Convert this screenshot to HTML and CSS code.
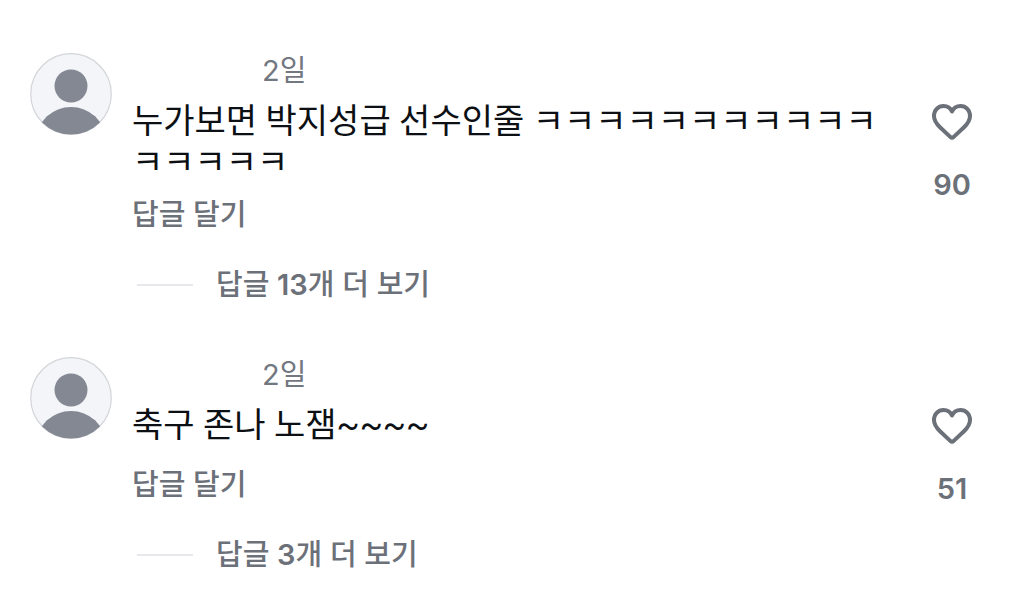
FILE: index.html
```html
<!DOCTYPE html>
<html lang="ko">
<head>
<meta charset="utf-8">
<meta name="viewport" content="width=device-width, initial-scale=1">
<title>댓글</title>
<link rel="stylesheet" href="styles.css">
</head>
<body>
<main class="comments">
  <article class="comment">
    <svg class="avatar" viewBox="0 0 82 82" aria-hidden="true">
      <defs><clipPath id="avatar-clip"><circle cx="41" cy="41" r="40.5"/></clipPath></defs>
      <circle cx="41" cy="41" r="40.3" fill="#f3f5f8" stroke="#d3d5d9" stroke-width="1.2"/>
      <circle cx="41" cy="33" r="16.5" fill="#838893"/>
      <ellipse cx="41" cy="86" rx="34" ry="32" fill="#838893" clip-path="url(#avatar-clip)"/>
    </svg>
    <div class="body">
      <time class="time">2일</time>
      <p class="text">누가보면 박지성급 선수인줄 ㅋㅋㅋㅋㅋㅋㅋㅋㅋㅋㅋㅋㅋㅋㅋㅋ</p>
      <button class="reply" type="button">답글 달기</button>
      <button class="more" type="button"><span class="line"></span><span>답글 <span class="count">13</span>개 더 보기</span></button>
    </div>
    <button class="like" type="button" aria-label="좋아요 90개">
      <svg class="heart" viewBox="0 0 40 36" aria-hidden="true"><path d="M20 7.500C18.500 4 15.500 2 11.500 2C6 2 2 6.300 2 12C2 16.500 4.300 19.700 8 23.200L18.300 32.900Q20 34.400 21.700 32.900L32 23.200C35.700 19.700 38 16.500 38 12C38 6.300 34 2 28.500 2C24.500 2 21.500 4 20 7.500Z"/></svg>
      <span class="count">90</span>
    </button>
  </article>
  <article class="comment">
    <svg class="avatar" viewBox="0 0 82 82" aria-hidden="true">
      <circle cx="41" cy="41" r="40.3" fill="#f3f5f8" stroke="#d3d5d9" stroke-width="1.2"/>
      <circle cx="41" cy="33" r="16.5" fill="#838893"/>
      <ellipse cx="41" cy="86" rx="34" ry="32" fill="#838893" clip-path="url(#avatar-clip)"/>
    </svg>
    <div class="body">
      <time class="time">2일</time>
      <p class="text">축구 존나 노잼~~~~</p>
      <button class="reply" type="button">답글 달기</button>
      <button class="more" type="button"><span class="line"></span><span>답글 <span class="count">3</span>개 더 보기</span></button>
    </div>
    <button class="like" type="button" aria-label="좋아요 51개">
      <svg class="heart" viewBox="0 0 40 36" aria-hidden="true"><path d="M20 7.500C18.500 4 15.500 2 11.500 2C6 2 2 6.300 2 12C2 16.500 4.300 19.700 8 23.200L18.300 32.900Q20 34.400 21.700 32.900L32 23.200C35.700 19.700 38 16.500 38 12C38 6.300 34 2 28.500 2C24.500 2 21.500 4 20 7.500Z"/></svg>
      <span class="count">51</span>
    </button>
  </article>
</main>
</body>
</html>
```
FILE: styles.css
```css
* { box-sizing: border-box; }
body {
  margin: 0;
  background: #fff;
  color: #0c1014;
  font-family: Inter, "Noto Sans CJK KR", sans-serif;
}
button {
  padding: 0;
  border: 0;
  background: none;
  color: #6c7179;
  font: inherit;
  font-weight: 500;
}
.comments {
  display: flex;
  flex-direction: column;
  gap: 52px;
  padding: 53px 48px 24px 30px;
}
.comment {
  display: flex;
  align-items: flex-start;
}
.avatar {
  flex: none;
  width: 82px;
  height: 82px;
  margin-right: 20px;
}
.body {
  flex: 1;
  display: flex;
  flex-direction: column;
  align-items: flex-start;
}
.time {
  margin-left: 130px;
  line-height: 36px;
  font-size: 29px;
  color: #737780;
}
.text {
  min-height: 48px;
  margin: 12px 0;
  font-family: Roboto, "Noto Sans CJK KR", sans-serif;
  font-size: 34px;
  line-height: 41px;
  word-break: break-all;
}
.reply, .more {
  font-size: 29px;
  line-height: 40px;
}
.more {
  display: flex;
  align-items: center;
  gap: 23px;
  margin: 30px 0 0 5px;
}
.line {
  width: 56px;
  height: 2px;
  background: #e6e8eb;
}
.count {
  font-weight: 600;
}
.like {
  flex: none;
  display: flex;
  flex-direction: column;
  align-items: center;
  gap: 27px;
  width: 48px;
  margin: 51px 0 0 32px;
  font-size: 29px;
  line-height: 36px;
}
.heart {
  width: 40px;
  height: 36px;
  fill: none;
  stroke: #6c7179;
  stroke-width: 4;
  stroke-linejoin: round;
}
```
